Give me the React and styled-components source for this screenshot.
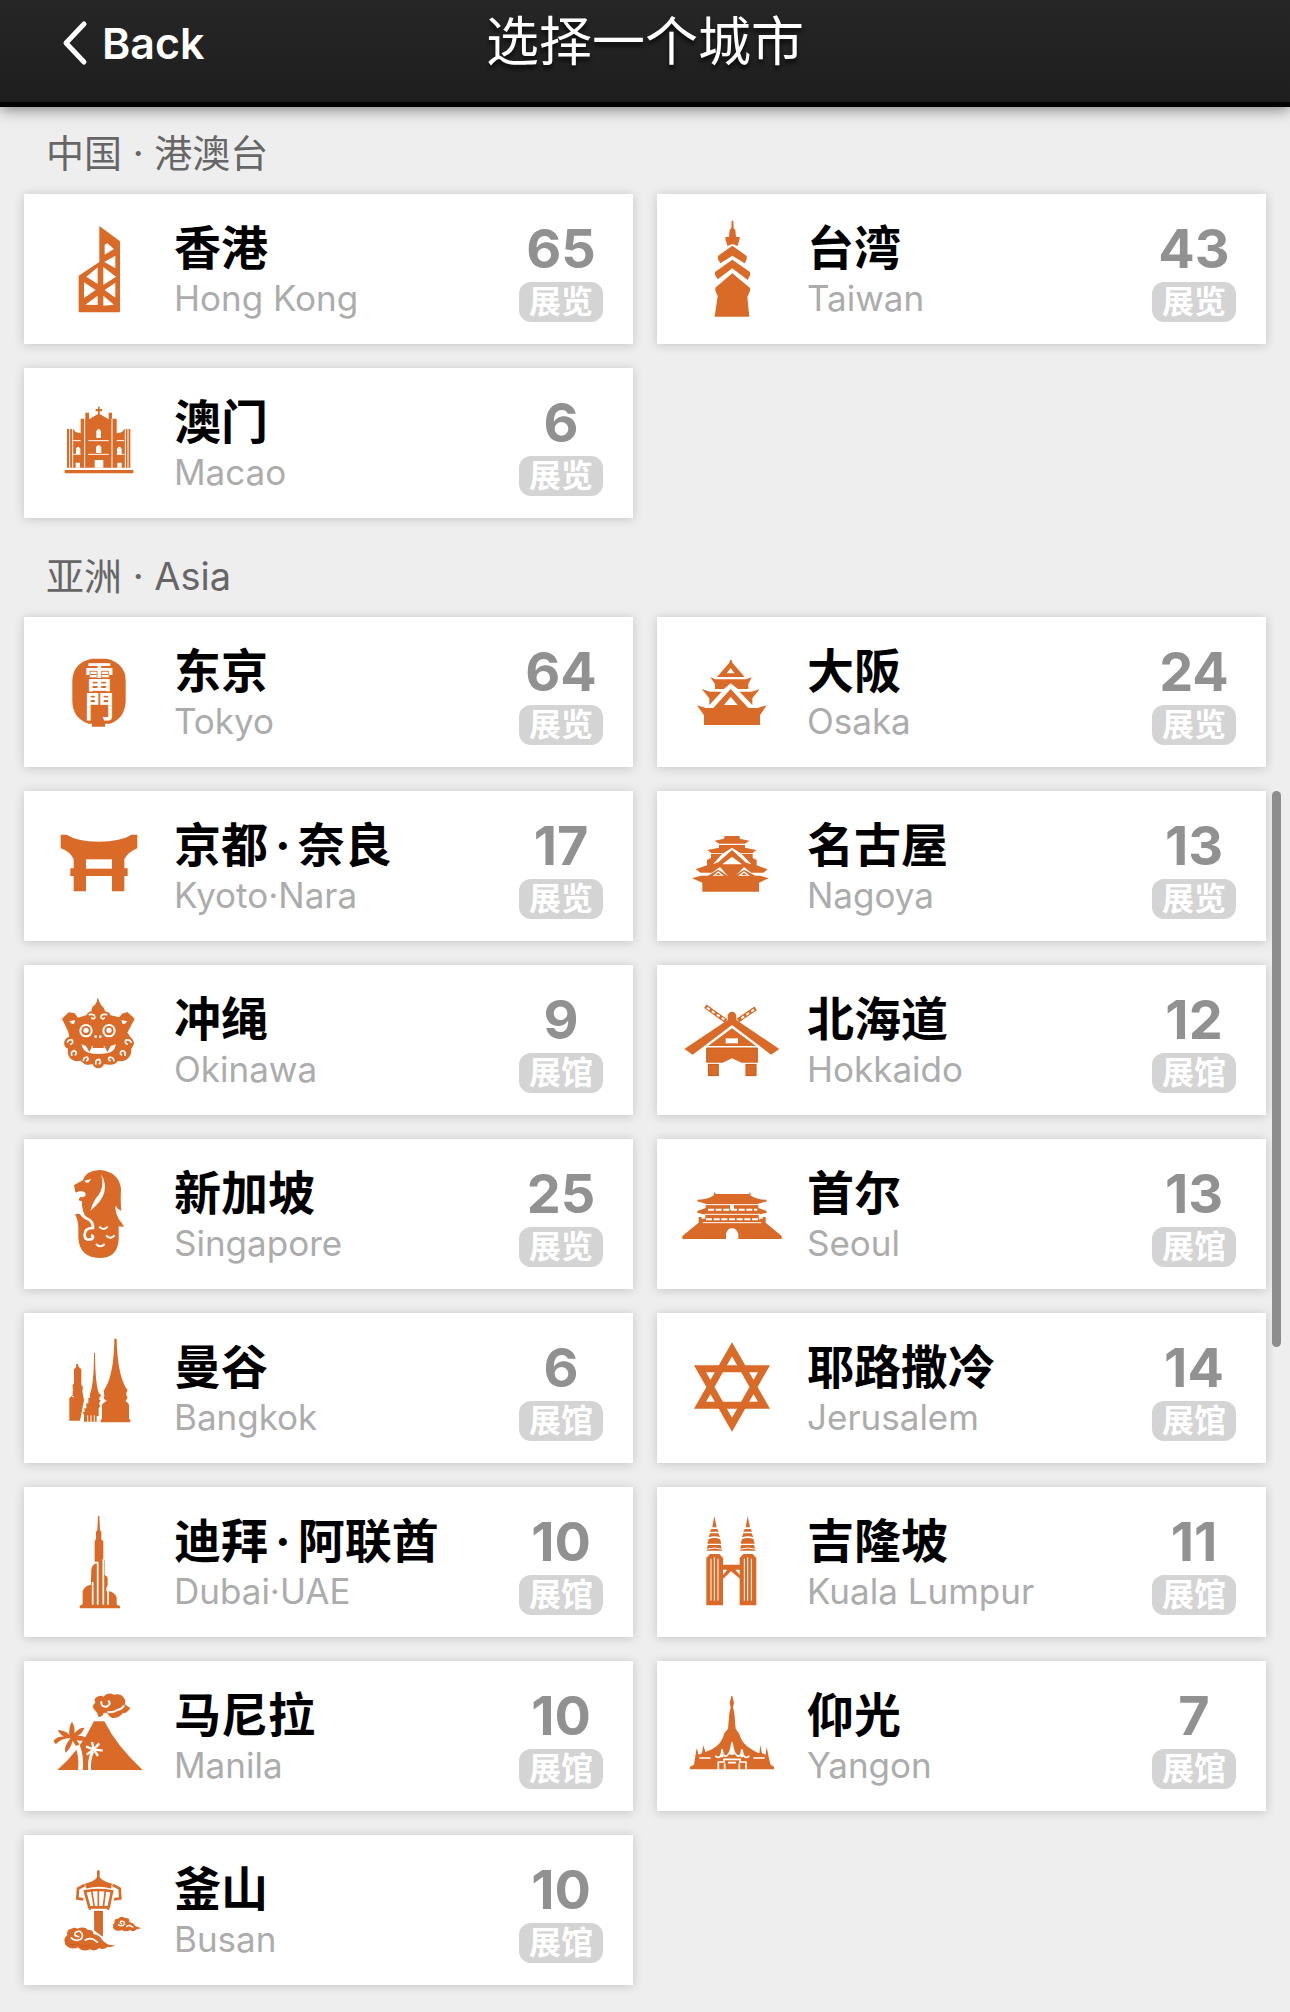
import React from "react";
import styled, { createGlobalStyle } from "styled-components";

const ORANGE = "#d96a28";

const GlobalStyle = createGlobalStyle`
  * {
    box-sizing: border-box;
  }
  body {
    margin: 0;
    background: #eeeeee;
    font-family: Inter, "Noto Sans CJK SC", sans-serif;
  }
`;

const Page = styled.div`
  padding-bottom: 27px;
`;

const Header = styled.header`
  display: grid;
  grid-template-columns: 1fr auto 1fr;
  align-items: center;
  padding: 0 60px 17px;
  color: #fff;
  background: linear-gradient(#262626, #1e1e1e);
  border-bottom: 5px solid #050203;
  box-shadow: 0 2px 14px rgba(0, 0, 0, 0.5);
`;

const BackButton = styled.button`
  display: flex;
  align-items: center;
  justify-self: start;
  gap: 12px;
  padding: 0;
  border: 0;
  background: none;
  color: inherit;
  font: 600 43px/84px Inter, sans-serif;
  cursor: pointer;
`;

const Title = styled.h1`
  margin: 0;
  font-size: 53px;
  font-weight: 400;
  line-height: 85px;
  text-shadow: 0 4px 4px rgba(0, 0, 0, 0.7);
`;

const Section = styled.section`
  padding: ${(props) => (props.$first ? 21 : 33)}px 24px 0;
`;

const SectionTitle = styled.h2`
  margin: 0 0 16px;
  padding-left: 22px;
  color: #666;
  font-size: 38px;
  font-weight: 400;
  line-height: 50px;
`;

const Grid = styled.div`
  display: grid;
  grid-template-columns: 1fr 1fr;
  gap: 24px;
`;

const Card = styled.a`
  display: flex;
  align-items: flex-start;
  height: 150px;
  padding: 0 30px 0 16px;
  background: #fff;
  box-shadow: 0 1px 10px rgba(0, 0, 0, 0.18);
  color: #000;
  text-decoration: none;
`;

const Picture = styled.svg`
  flex: none;
  width: 120px;
  height: 120px;
  margin: 15px 14px 0 0;
  fill: ${ORANGE};
`;

const Cut = styled.g`
  fill: #fff;
`;

const Line = styled.path`
  fill: none;
  stroke: #fff;
  stroke-width: ${(props) => props.$width || 6};
`;

const Pen = styled.path`
  fill: none;
  stroke: ${(props) => (props.$dark ? "#b9581f" : ORANGE)};
  stroke-width: ${(props) => props.$width || 8};
`;

const LanternText = styled.text`
  fill: #fff;
  font: 700 88px "Noto Sans CJK JP", sans-serif;
  writing-mode: vertical-rl;
`;

const Names = styled.div`
  flex: 1;
  min-width: 0;
  padding-top: 26px;
`;

const Name = styled.div`
  font-size: 47px;
  font-weight: 700;
  line-height: 56px;
  white-space: nowrap;
`;

const Dot = styled.span`
  margin: 0 7px;
`;

const English = styled.div`
  color: #acacac;
  font-size: 35px;
  line-height: 44px;
  white-space: nowrap;
`;

const Count = styled.div`
  display: flex;
  flex-direction: column;
  align-items: center;
  gap: 5px;
  padding-top: 27px;
`;

const CountNumber = styled.div`
  color: #919191;
  font-size: 54px;
  font-weight: 700;
  line-height: 56px;
`;

const Badge = styled.div`
  width: 84px;
  border-radius: 12px;
  background: #d4d4d4;
  color: #fff;
  font-size: 32px;
  font-weight: 700;
  line-height: 40px;
  text-align: center;
`;

const ScrollThumb = styled.div`
  position: fixed;
  top: 791px;
  right: 9px;
  width: 9px;
  height: 556px;
  border-radius: 5px;
  background: #8d8d8d;
`;

// every drawing keeps its own origin, 3 units to a pixel
const icons = {
  hongkong: {
    box: "0 -3 360 360",
    art: (
      <>
        <path d="M178 48L240 94V304Q240 307 237 307H119Q116 307 116 304V197L178 156Z" />
        <Cut>
          <path d="M194 104L202 100L222 117L194 134ZM226 137V175L193 156ZM190 171L228 200L190 225ZM226 218V263L194 240ZM190 257L222 284L190 287ZM173 172V222L139 200ZM132 217L167 240L132 264ZM173 257V285L136 284Z" />
        </Cut>
      </>
    ),
  },
  taiwan: {
    box: "9 -3 360 360",
    art: (
      <>
        <path d="M185 32H190L191 55L196 60L198 80L210 82L203 108L187 102L172 108L165 82L177 80L179 60L184 55Z" />
        <path d="M187 107L230 138V148L224 160L187 137L151 160L144 148V138Z" />
        <path d="M187 149L240 186V196L233 210L187 175L143 208L135 194V186Z" />
        <path d="M187 190L240 234V242L232 262L238 320H134L143 258L136 242V233Z" />
      </>
    ),
  },
  macao: {
    box: "0 519 360 360",
    art: (
      <>
        <path d="M174 590H179V597H186V604H179V612L206 628V608H216V626H230V670Q250 668 252 657H271V773H81V657H101Q104 668 122 670V626H136V608H147V628L174 612V604H167V597H174ZM74 780H280V790H74Z" />
        <Line
          $width={3}
          d="M89 657V773M98 657V773M134 626V773M216 626V773M256 657V773M264 657V773M100 692H122M145 692H206M230 692H252M100 733H122M145 733H206M230 733H252"
        />
        <Cut>
          <path d="M169 684V664Q176 650 183 664V684ZM168 729V712Q176 698 184 712V729ZM108 732V716Q114 704 121 716V732ZM231 732V716Q238 704 245 716V732ZM164 773V750H190V773ZM107 773V758H120V773ZM232 773V758H245V773Z" />
        </Cut>
      </>
    ),
  },
  tokyo: {
    box: "0 6 360 360",
    art: (
      <>
        <path d="M155 86H200Q256 100 257 150V215Q254 265 210 281H195V290H156V281H146Q99 265 97 215V150Q100 98 155 86Z" />
        <LanternText x="178" y="97">
          雷門
        </LanternText>
      </>
    ),
  },
  osaka: {
    box: "9 6 360 360",
    art: (
      <>
        <path d="M180 90H185L187 98L224 141H141L178 98Z" />
        <path d="M121 142L137 148H228L245 142L235 162V177H204L182 160L162 177H135V162Z" />
        <path d="M95 177L120 185H155L118 225V205Z" />
        <path d="M269 177L245 185H209L247 225V205Z" />
        <path d="M182 177L235 234H262L290 226L270 256V285H102V256L81 226L108 234H130Z" />
        <Cut>
          <path d="M182 114L194 130H170ZM182 200L203 225H162Z" />
        </Cut>
      </>
    ),
  },
  kyoto: {
    box: "0 528 360 360",
    art: (
      <>
        <path d="M62 614H80Q110 634 176 635Q245 634 274 614H292V655Q264 666 253 688V715H263V738H253V784H216V738H138V784H101V738H91V715H101V688Q90 664 62 655Z" />
        <Cut>
          <path d="M138 688H216V716H138Z" />
        </Cut>
      </>
    ),
  },
  nagoya: {
    box: "9 528 360 360",
    art: (
      <>
        <path d="M164 618H209V626L238 632L225 641H147L134 632L162 626Z" />
        <path d="M147 645H225V653L259 660L247 670H212L186 653L160 670H125L112 660L147 653Z" />
        <path d="M123 672H156L129 703L145 697L186 660L228 698L244 703L215 672H248V684L260 690V706L293 718L280 728H244L222 711L196 738H174L150 711L126 728H92L77 718L111 706V690L123 684Z" />
        <path d="M66 745L92 737H114L145 719L174 738H194L222 719L256 737H270L296 745L267 758V785H97V758Z" />
        <Cut>
          <path d="M186 680L216 703H157ZM145 724L162 737H128ZM222 724L240 737H204Z" />
        </Cut>
        <path d="M138 735L145 728L152 735ZM215 735L222 728L229 735Z" />
      </>
    ),
  },
  okinawa: {
    box: "0 0 360 360",
    art: (
      <>
        <path d="M173 52Q178 68 184 76Q194 84 195 94Q208 96 212 106L238 112L246 101L262 96L284 116L262 158L272 172Q286 184 280 196L274 206Q276 228 258 240Q242 246 234 242Q226 256 206 254L192 252Q186 266 174 265Q162 264 158 252Q136 260 122 242Q96 248 86 228Q82 218 84 206Q70 202 73 184Q76 174 88 170L84 154L66 116L86 97L104 100L114 113L140 105Q144 95 155 94Q154 80 164 76Q172 66 173 52Z" />
        <Cut>
          <circle cx="138" cy="152" r="20" />
          <circle cx="207" cy="152" r="20" />
          <path d="M88 124L106 120L102 132H96ZM262 124L244 120L248 132H254Z" />
          <path d="M124 192Q134 200 146 196Q176 204 204 196Q216 200 228 192Q224 216 204 219Q174 225 148 219Q128 214 124 192Z" />
        </Cut>
        <circle cx="138" cy="152" r="14" />
        <circle cx="207" cy="152" r="14" />
        <path d="M136 195H158L148 216ZM192 195H214L202 216ZM160 196H190L192 204H158Z" />
        <Cut>
          <circle cx="138" cy="151" r="8" />
          <circle cx="207" cy="151" r="8" />
          <circle cx="167" cy="170" r="4" />
          <circle cx="181" cy="170" r="4" />
        </Cut>
        <Line
          $width={5}
          d="M146 104Q166 100 164 114Q158 120 154 112M202 104Q180 100 184 114Q190 120 194 112M82 188Q84 177 96 180Q102 190 90 193M274 188Q270 177 258 180Q252 190 264 193M96 228Q90 214 104 212Q114 220 104 226M254 228Q260 214 246 212Q236 220 246 226M130 244Q130 230 142 232Q148 240 138 243M222 244Q220 230 208 232Q202 240 212 243M168 254Q164 238 178 238Q186 248 176 252"
        />
      </>
    ),
  },
  hokkaido: {
    box: "9 0 360 360",
    art: (
      <>
        <path d="M173 120V106Q176 96 186 95Q196 96 199 106V120L328 207L303 224L186 135L68 224L43 207Z" />
        <path d="M186 145L258 198H114ZM109 203H263V248H215L186 235L158 248H109ZM114 252H146V288H114ZM227 252H259V288H227Z" />
        <Pen $width={13} d="M106 79L168 123M257 85L204 121" />
        <Line strokeDasharray="10 8" d="M111 83L163 119M252 89L208 119" />
        <Cut>
          <path d="M167 175H204V190H167Z" />
        </Cut>
        <Pen $dark $width={2} d="M110 247V204H262V247M115 253H145V287H115ZM228 253H258V287H228Z" />
      </>
    ),
  },
  singapore: {
    box: "0 522 360 360",
    art: (
      <>
        <path d="M102 615L129 601Q136 573 178 570Q236 574 243 626Q241 664 244 693L230 684Q236 716 252 741L236 739V780Q232 834 178 834Q118 831 115 774V742Q114 718 105 703Q114 699 124 704Q132 714 142 716Q124 696 126 664L116 661Q116 653 125 648L106 636Z" />
        <Cut>
          <path d="M133 602L154 597L145 608Q136 609 133 602ZM108 638Q122 628 136 638Q140 650 125 652Q112 649 108 638ZM183 582Q218 640 151 692Q156 672 168 654Q196 626 183 582Z" />
        </Cut>
        <Line $width={8} d="M120 697Q132 714 142 716Q160 724 159 744Q134 744 134 764Q134 784 156 777Q164 768 153 766" />
        <Line d="M178 740Q190 754 203 740M198 766Q211 780 224 766M168 792Q181 806 194 792" />
        <Line $width={5} d="M228 680Q230 706 244 724" />
      </>
    ),
  },
  seoul: {
    box: "9 522 360 360",
    art: (
      <>
        <path d="M133 636L138 642H236L241 636V646Q260 660 290 659V664L265 671V684L290 693V698L266 704V716H278V711H287V728L335 768V777H37V768L86 728V711H95V716H106V704L82 698V693L107 684V671L82 664V659Q112 660 131 646Z" />
        <Cut>
          <path d="M168 777V762Q172 745 186 744Q200 745 205 762V777ZM180 674H192V689H180Z" />
        </Cut>
        <Line $width={3} d="M106 674H266M104 703H270M98 728H274" />
        <Line strokeDasharray="18 5" d="M114 689H262M108 718H270" />
      </>
    ),
  },
  bangkok: {
    box: "0 24 360 360",
    art: (
      <>
        <path d="M109 132H114L116 140L124 148V194L129 202L127 212L130 230L132 240L120 302H88V234L98 226V196L102 190V148L108 142Z" />
        <path d="M162 98H165Q166 200 178 222H182V229L178 233V240H182L178 248V256H182L176 265V288H170V305H132V286L128 276H134L133 265H139V250H145V234H150V222Q162 190 162 98Z" />
        <path d="M223 56H230Q232 160 258 204L263 210L259 219V226L263 232L257 243Q264 248 267 254V296L271 300V307H182V300L186 296V254Q192 246 200 242L191 236L193 226L191 212L196 204Q222 160 223 56Z" />
        <Line $width={3} d="M143 286V307M153 286V307M163 286V307M96 210H100M96 230H102" />
      </>
    ),
  },
  jerusalem: {
    box: "9 24 360 360",
    art: <Pen $width={21} d="M186 88L282 256H90ZM186 314L90 146H282Z" />,
  },
  dubai: {
    box: "0 546 360 360",
    art: (
      <>
        <path d="M174 588H178L180 630L184 636V658L190 664V716L194 720V764L203 772V796L199 804V814H208Q224 818 230 832V854L240 858V865H119V858L128 852V812Q136 796 153 794V782L154 748Q156 736 164 732V664L168 656V636L172 630Z" />
        <Line $width={5} d="M158 854V786M173 854V728H160M190 854V716M204 854V806" />
      </>
    ),
  },
  kualalumpur: {
    box: "9 546 360 360",
    art: (
      <>
        {[0, 100].map((shift) => (
          <g key={shift} transform={`translate(${shift} 0)`}>
            <path d="M133 588L140 622H127ZM124 627H142L146 635H120ZM120 640H145L150 652Q134 646 116 652ZM116 657Q134 651 150 657L154 671H112ZM114 675H152L157 692H110L112 680ZM120 702H148L159 714V856H109V714Z" />
            <Line $width={3} d="M123 716V842M133 712V842M144 716V842M108 688Q134 680 158 688" />
          </g>
        ))}
        <path d="M156 734H212V749H196L212 768V778L183 754L156 780V768L172 749H156Z" />
      </>
    ),
  },
  manila: {
    box: "0 18 360 360",
    art: (
      <>
        <path d="M162 154H193Q230 228 308 300H52Q120 242 162 154Z" />
        <path d="M176 142Q172 126 162 118Q154 106 166 98Q160 84 172 80Q184 74 190 80Q204 64 222 74Q242 70 250 82Q260 92 254 103Q266 112 271 114Q262 130 248 130Q236 146 216 144Q206 140 204 132Q196 126 190 130Q192 138 176 142Z" />
        <Line d="M184 94Q182 112 200 110Q216 100 204 92M202 126Q222 128 232 120Q248 116 252 106" />
        <path d="M92 204Q64 204 48 222Q40 218 42 210Q56 198 72 200Q56 190 54 180Q76 182 88 194Q86 168 96 155Q106 172 103 190Q118 172 133 173Q128 190 112 198Q130 194 140 208Q126 216 110 210Q122 226 118 238Q104 226 98 212Q92 236 76 248Q70 230 92 204Z" />
        <Line $width={14} d="M112 226Q126 260 121 302" />
        <Line $width={9} d="M158 244Q146 270 149 302" />
        <Line $width={7} d="M161 238L138 230M161 238L156 216M161 238L178 220M161 238L188 242M161 238L174 258M161 238L140 254" />
      </>
    ),
  },
  yangon: {
    box: "9 18 360 360",
    art: (
      <>
        <path d="M184 78H187L192 98L189 112L193 130L197 176L208 192Q214 220 242 236L258 246L268 250L271 226L276 250L287 254L290 230L298 270L302 284L312 290V298H60V290L72 284L80 234L86 254L96 250L100 226L106 246L126 238Q156 222 163 190L174 176L178 130L182 112L179 98Z" />
        <Line $width={5} d="M88 264H122M250 264H284M136 258Q154 272 156 238Q160 266 172 256Q182 250 186 218Q190 250 200 256Q212 266 216 238Q220 272 238 258" />
        <Line $width={5} d="M145 298V276H162V268H210V276H228V298M164 298V280M208 298V280M174 278H198" />
        <Cut>
          <path d="M152 262L156 236L160 262ZM180 254L186 214L192 254ZM211 262L216 236L220 262Z" />
        </Cut>
      </>
    ),
  },
  busan: {
    box: "0 540 360 360",
    art: (
      <>
        <path d="M171 622V604Q175 596 179 604V622Q188 634 218 642L210 652Q176 640 142 652L133 642Q164 634 171 622Z" />
        <Pen d="M134 645L114 656L112 685L130 688M218 645L239 656L241 685L222 688M138 652Q176 640 214 652" />
        <Pen d="M135 664Q176 656 216 664L206 712H148Z" />
        <Pen $width={5} d="M155 662L163 712M175 662V712M196 662L190 712M150 712V720M204 712V720" />
        <path d="M163 723H188V800L164 782Z" />
        <path d="M76 824Q68 804 82 796Q78 778 94 776Q104 770 112 776Q134 768 144 780Q160 778 160 792Q178 796 184 806Q194 820 208 824Q218 826 226 826Q214 834 204 830Q188 842 178 834Q164 846 150 838Q128 848 114 832Q94 842 76 824Z" />
        <Line $width={5} d="M118 800Q106 800 104 792Q108 782 120 784Q134 796 122 808Q104 816 92 802M134 812Q146 802 160 808L174 818" />
        <path d="M222 778Q214 766 224 758Q220 746 234 746Q244 736 254 744Q270 742 268 756Q280 758 286 768L304 775L290 778Q280 788 270 780Q258 788 246 780Q232 786 222 778Z" />
        <Line $width={4} d="M246 762Q238 760 242 754Q254 752 254 762Q246 772 234 764M258 770L268 766L280 772" />
        <Pen $dark $width={2} d="M164 782V724H187V798M82 806Q76 822 92 824Q104 826 114 820Q128 836 148 826" />
      </>
    ),
  },
};

const chinaCities = [
  { id: "hongkong", name: "香港", english: "Hong Kong", count: 65, unit: "展览" },
  { id: "taiwan", name: "台湾", english: "Taiwan", count: 43, unit: "展览" },
  { id: "macao", name: "澳门", english: "Macao", count: 6, unit: "展览" },
];

const asiaCities = [
  { id: "tokyo", name: "东京", english: "Tokyo", count: 64, unit: "展览" },
  { id: "osaka", name: "大阪", english: "Osaka", count: 24, unit: "展览" },
  { id: "kyoto", name: "京都·奈良", english: "Kyoto·Nara", count: 17, unit: "展览" },
  { id: "nagoya", name: "名古屋", english: "Nagoya", count: 13, unit: "展览" },
  { id: "okinawa", name: "冲绳", english: "Okinawa", count: 9, unit: "展馆" },
  { id: "hokkaido", name: "北海道", english: "Hokkaido", count: 12, unit: "展馆" },
  { id: "singapore", name: "新加坡", english: "Singapore", count: 25, unit: "展览" },
  { id: "seoul", name: "首尔", english: "Seoul", count: 13, unit: "展馆" },
  { id: "bangkok", name: "曼谷", english: "Bangkok", count: 6, unit: "展馆" },
  { id: "jerusalem", name: "耶路撒冷", english: "Jerusalem", count: 14, unit: "展馆" },
  { id: "dubai", name: "迪拜·阿联酋", english: "Dubai·UAE", count: 10, unit: "展馆" },
  { id: "kualalumpur", name: "吉隆坡", english: "Kuala Lumpur", count: 11, unit: "展馆" },
  { id: "manila", name: "马尼拉", english: "Manila", count: 10, unit: "展馆" },
  { id: "yangon", name: "仰光", english: "Yangon", count: 7, unit: "展馆" },
  { id: "busan", name: "釜山", english: "Busan", count: 10, unit: "展馆" },
];

function CityCard({ city }) {
  const icon = icons[city.id];
  const [first, second] = city.name.split("·");

  return (
    <Card href={"#" + city.id}>
      <Picture viewBox={icon.box} aria-hidden="true">
        {icon.art}
      </Picture>
      <Names>
        <Name>
          {first}
          {second ? <Dot>·</Dot> : null}
          {second}
        </Name>
        <English>{city.english}</English>
      </Names>
      <Count>
        <CountNumber>{city.count}</CountNumber>
        <Badge>{city.unit}</Badge>
      </Count>
    </Card>
  );
}

function CitySection({ title, cities, first }) {
  return (
    <Section $first={first}>
      <SectionTitle>{title}</SectionTitle>
      <Grid>
        {cities.map((city) => (
          <CityCard key={city.id} city={city} />
        ))}
      </Grid>
    </Section>
  );
}

function App() {
  return (
    <Page lang="zh-CN">
      <GlobalStyle />
      <Header>
        <BackButton type="button">
          <svg width="30" height="48" viewBox="0 0 30 48" fill="none" stroke="#fff" strokeWidth="5" strokeLinecap="round" strokeLinejoin="round">
            <path d="M24 5L6 24L24 43" />
          </svg>
          Back
        </BackButton>
        <Title>选择一个城市</Title>
      </Header>
      <CitySection title="中国 · 港澳台" cities={chinaCities} first />
      <CitySection title="亚洲 · Asia" cities={asiaCities} />
      <ScrollThumb />
    </Page>
  );
}

export default App;
